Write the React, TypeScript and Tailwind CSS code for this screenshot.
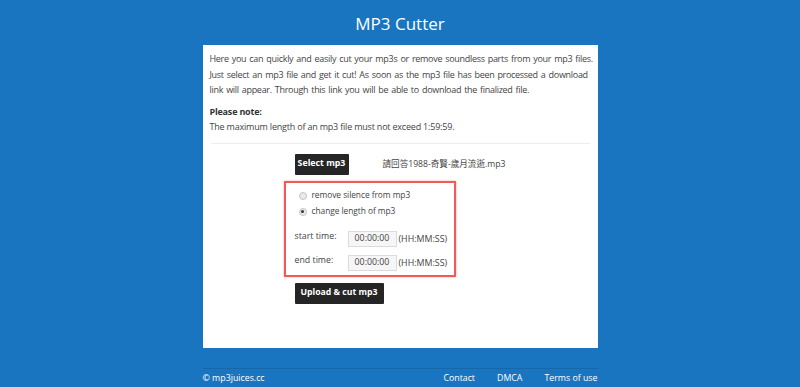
import React from 'react';

function Radio({ checked, label }: { checked?: boolean; label: string }) {
  return (
    <div className="flex items-center h-[16px]">
      <span className="w-[8px] h-[8px] rounded-full border border-[#c4c4c4] bg-[#eaeaea] flex items-center justify-center">
        {checked && <span className="w-[3px] h-[3px] rounded-full bg-[#333]" />}
      </span>
      <span className="ml-[5px] text-[8.4px] tracking-[-0.05px] text-[#444] whitespace-nowrap">{label}</span>
    </div>
  );
}

function TimeRow({ label }: { label: string }) {
  return (
    <div className="flex items-center h-[16px]">
      <span className="w-[53px] text-[8.8px] text-[#444] -mt-[4px] whitespace-nowrap">{label}</span>
      <span className="w-[49px] h-[16px] border border-[#dcdcdc] bg-[#f6f6f6] flex items-center justify-center text-[8.8px] text-[#444]">
        00:00:00
      </span>
      <span className="ml-[2px] text-[8.9px] text-[#444] whitespace-nowrap">(HH:MM:SS)</span>
    </div>
  );
}

export default function App() {
  return (
    <div className="w-[800px] h-[387px] bg-[#1a75c1] overflow-hidden font-['Open_Sans',sans-serif]">
      <header className="h-[46px] flex items-center justify-center">
        <h1 className="text-[17px] text-white leading-none">MP3 Cutter</h1>
      </header>

      <main className="mx-auto -mt-[1px] w-[395px] h-[303px] bg-white px-[7px] pt-[6px] text-[#444]">
        <p className="text-[9px] tracking-[-0.3px] [word-spacing:1px] leading-[15.5px] whitespace-nowrap">
          Here you can quickly and easily cut your mp3s or remove soundless parts from your mp3 files.
          <br />
          Just select an mp3 file and get it cut! As soon as the mp3 file has been processed a download
          <br />
          link will appear. Through this link you will be able to download the finalized file.
        </p>
        <p className="mt-[6px] text-[9px] tracking-[-0.2px] leading-[15.5px]">
          <span className="font-bold text-[#333]">Please note:</span>
          <br />
          The maximum length of an mp3 file must not exceed 1:59:59.
        </p>
        <div className="mx-[1px] mt-[8px] border-t border-[#eeeeee]" />

        <div className="ml-[74px] mt-[10px]">
          <div className="ml-[11px] flex items-center">
            <button className="w-[54px] h-[21px] bg-[#252525] text-white text-[8.8px] font-bold rounded-[1px] whitespace-nowrap">
              Select mp3
            </button>
            <span className="ml-[34px] text-[8.6px] text-[#444] whitespace-nowrap font-['Open_Sans','Noto_Sans_CJK_TC',sans-serif]">
              請回答1988-奇賢-歲月流逝.mp3
            </span>
          </div>

          <div className="mt-[6px] w-[172px] h-[96px] border-2 border-[#f05a5a] shadow-[0_0_2px_rgba(240,90,90,0.5)] pl-[9px] pt-[5px]">
            <div className="ml-[4px]">
              <Radio label="remove silence from mp3" />
              <Radio checked label="change length of mp3" />
            </div>
            <div className="mt-[11px] flex flex-col gap-[8px]">
              <TimeRow label="start time:" />
              <TimeRow label="end time:" />
            </div>
          </div>

          <button className="ml-[11px] mt-[6px] w-[89px] h-[21px] bg-[#252525] text-white text-[8.7px] font-bold rounded-[1px] whitespace-nowrap">
            Upload &amp; cut mp3
          </button>
        </div>
      </main>

      <footer className="mx-auto w-[395px] mt-[20px] border-t border-[#1767ab] pt-[3px] flex items-center text-[8.8px] text-white">
        <span>© mp3juices.cc</span>
        <nav className="ml-auto flex gap-[22px]">
          <span>Contact</span>
          <span>DMCA</span>
          <span>Terms of use</span>
        </nav>
      </footer>
    </div>
  );
}
